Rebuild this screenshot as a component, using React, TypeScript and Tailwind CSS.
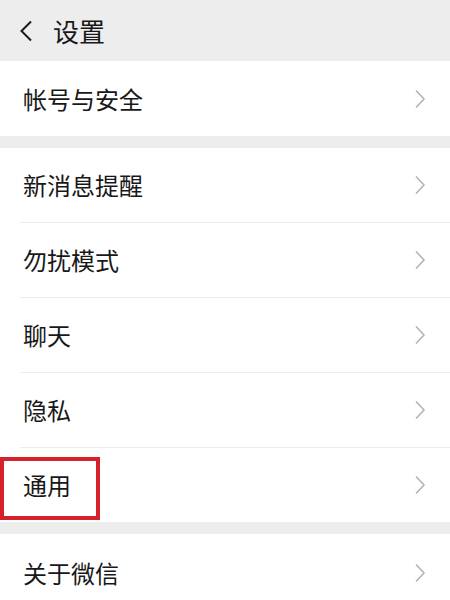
import React from "react"

const font = { fontFamily: '"Noto Sans CJK SC", "Noto Sans", sans-serif' }

function Chevron() {
  return (
    <svg width="12" height="20" viewBox="0 0 12 20" className="shrink-0">
      <path d="M2 1.5 L10 10 L2 18.5" fill="none" stroke="#b3b3b3" strokeWidth="1.6" />
    </svg>
  )
}

function Row({ label, divider, highlight }: { label: string; divider?: boolean; highlight?: boolean }) {
  return (
    <div className="relative bg-white">
      <div className="flex h-[74px] items-center justify-between pl-[23px] pr-[24px]">
        <span className="text-[24px] leading-none text-[#181818]">{label}</span>
        <Chevron />
      </div>
      {divider && <div className="ml-[20px] h-px bg-[#ececec]" />}
      {highlight && (
        <div className="absolute left-0 top-[9px] h-[63px] w-[100px] border-[4px] border-[#d6202c]" />
      )}
    </div>
  )
}

export default function App() {
  return (
    <div className="h-[600px] w-[450px] overflow-hidden bg-[#ededed]" style={font}>
      <div className="flex h-[61px] items-center bg-[#ededed] pl-[19px]">
        <svg width="14" height="22" viewBox="0 0 14 22" className="shrink-0">
          <path d="M12 1.5 L2.5 11 L12 20.5" fill="none" stroke="#1a1a1a" strokeWidth="2" />
        </svg>
        <span className="ml-[20px] text-[26px] leading-none text-[#181818]">设置</span>
      </div>

      <div className="bg-white">
        <div className="flex h-[75px] items-center justify-between pl-[23px] pr-[24px]">
          <span className="text-[24px] leading-none text-[#181818]">帐号与安全</span>
          <Chevron />
        </div>
      </div>

      <div className="h-[12px]" />

      <div className="flex flex-col">
        <Row label="新消息提醒" divider />
        <Row label="勿扰模式" divider />
        <Row label="聊天" divider />
        <Row label="隐私" divider />
        <Row label="通用" highlight />
      </div>

      <div className="h-[12px]" />

      <div className="bg-white">
        <div className="flex h-[78px] items-center justify-between pl-[23px] pr-[24px]">
          <span className="text-[24px] leading-none text-[#181818]">关于微信</span>
          <Chevron />
        </div>
      </div>
    </div>
  )
}
